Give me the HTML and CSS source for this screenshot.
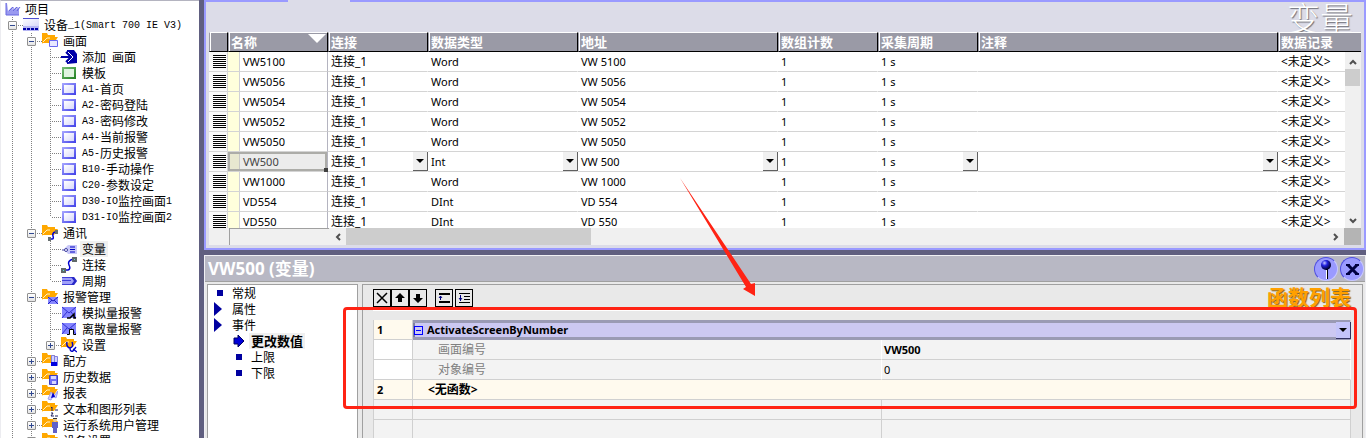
FILE: index.html
```
<!DOCTYPE html>
<html lang="zh-CN">
<head>
    <meta charset="UTF-8">
    <meta name="viewport" content="width=device-width, initial-scale=1.0">
    <title>变量</title>
    <link rel="stylesheet" href="styles.css">
</head>
<body>
    <!-- Иконки дерева и кнопок -->
    <svg class="sprite" width="0" height="0" aria-hidden="true">
        <defs>
            <linearGradient id="gBlue" x1="0" y1="0" x2="1" y2="1">
                <stop offset="0" stop-color="#a8a8ff"/>
                <stop offset="1" stop-color="#4040e8"/>
            </linearGradient>
            <linearGradient id="gGreen" x1="0" y1="0" x2="1" y2="1">
                <stop offset="0" stop-color="#78c078"/>
                <stop offset="1" stop-color="#208020"/>
            </linearGradient>
            <linearGradient id="gFace" x1="0" y1="0" x2="1" y2="1">
                <stop offset="0" stop-color="#ffffff"/>
                <stop offset="1" stop-color="#d8d8fa"/>
            </linearGradient>
            <radialGradient id="gBall" cx="0.35" cy="0.3" r="0.7">
                <stop offset="0" stop-color="#c8c8ff"/>
                <stop offset="0.4" stop-color="#2020e0"/>
                <stop offset="1" stop-color="#000020"/>
            </radialGradient>
        </defs>
        <symbol id="i-project" viewBox="0 0 16 16">
            <path d="M1 2h1l1 8 4-4v4l4-4v4l3-4v8H1z" fill="#9a9af0"/>
            <path d="M1 2v12h13M4 10l4-4v4l4-4v4l3-4" fill="none" stroke="#6868e0"/>
        </symbol>
        <symbol id="i-device" viewBox="0 0 16 16">
            <path d="M0 1h16v8H0z" fill="url(#gFace)"/>
            <path d="M0 9h16v5H0z" fill="#b8b8f4"/>
            <path d="M0 1.500h16" stroke="#5050d0"/>
            <path d="M0 11h3v2H0zM4 11h3v2H4zM8 11h3v2H8zM12 11h3v2h-3z" fill="#0000a8"/>
        </symbol>
        <symbol id="i-folder" viewBox="0 0 16 16">
            <path d="M0 0h5l1 2h7v2H6l-4 4-2 3z" fill="#ffa800"/>
            <path d="M5 4h11l-4 6H0z" fill="#ffa800"/>
            <path d="M1 9l4-4h3" fill="none" stroke="#fff0c0"/>
        </symbol>
        <symbol id="i-fscreen" viewBox="0 0 16 16">
            <use href="#i-folder"/>
            <path d="M7.500 7.500h8v6h-8z" fill="#e8e8ff" stroke="#6868f0"/>
        </symbol>
        <symbol id="i-fcomm" viewBox="0 0 16 16">
            <use href="#i-folder"/>
            <path d="M8 14h2q2 0 1-3t2-4" fill="none" stroke="#0000d0" stroke-width="1.500"/>
            <path d="M13 5h3v4h-3zM6 12h3v4H6z" fill="#687070"/>
        </symbol>
        <symbol id="i-falarm" viewBox="0 0 16 16">
            <use href="#i-folder"/>
            <path d="M6 8h10v7H6z" fill="#8888ff"/>
            <path d="M6 8l5 4 5-4M6 15l4-4M16 15l-4-4" fill="none" stroke="#2020c0"/>
        </symbol>
        <symbol id="i-fset" viewBox="0 0 16 16">
            <use href="#i-folder"/>
            <path d="M6 5q-1 5 3 6q4-1 2-6M9 11q0 4 3 3l3-4M12 12l4 3" fill="none" stroke="#0000c8" stroke-width="1.400"/>
        </symbol>
        <symbol id="i-frecipe" viewBox="0 0 16 16">
            <use href="#i-folder"/>
            <path d="M9.500 2.500h3v9h-3zM12.500 3.500h3v9h-3z" fill="#d0d0ff" stroke="#8080e0"/>
            <path d="M9 9h6v4H9z" fill="#0000e0"/>
        </symbol>
        <symbol id="i-fhist" viewBox="0 0 16 16">
            <use href="#i-folder"/>
            <path d="M7.500 6.500h8v9h-8z" fill="#7070f8" stroke="#4040c0"/>
            <path d="M9 7h5v3H9zM10 12h4v3h-4z" fill="#d8d8ff"/>
        </symbol>
        <symbol id="i-freport" viewBox="0 0 16 16">
            <use href="#i-folder"/>
            <path d="M6 14l3-7 3 4 4-5-2 7-3-2-2 4z" fill="#d0d0ff" stroke="#a0a0f0"/>
            <path d="M9 13l2-6 2 5z" fill="#0000d0"/>
        </symbol>
        <symbol id="i-ftext" viewBox="0 0 16 16">
            <use href="#i-folder"/>
            <path d="M9 7l1-1v4M9 12h2l-2 3h3M13 9h3M13 15h3" fill="none" stroke="#202060"/>
        </symbol>
        <symbol id="i-fuser" viewBox="0 0 16 16">
            <use href="#i-folder"/>
            <circle cx="13" cy="3" r="2" fill="#f0c890"/>
            <path d="M11 1h4v1h-4z" fill="#303030"/>
            <path d="M10 5h6v6h-1v5h-4v-5h-1z" fill="#6060c8"/>
        </symbol>
        <symbol id="i-add" viewBox="0 0 16 16">
            <path d="M6 1h7l3 4v9l-10 1v-3l3-3V7L6 5z" fill="#0000a8"/>
            <path d="M0 8h9M5 3l5 5-5 5" fill="none" stroke="#0000a8" stroke-width="2"/>
            <path d="M7 3l5 5-5 5" fill="none" stroke="#fff"/>
        </symbol>
        <symbol id="i-template" viewBox="0 0 16 16">
            <path d="M1 2h14v12H1z" fill="url(#gGreen)"/>
            <path d="M3 4h10v8H3z" fill="#e0f4e0"/>
        </symbol>
        <symbol id="i-screen" viewBox="0 0 16 16">
            <path d="M1 2h14v12H1z" fill="url(#gBlue)"/>
            <path d="M3 4h10v8H3z" fill="url(#gFace)"/>
        </symbol>
        <symbol id="i-tag" viewBox="0 0 16 16">
            <path d="M3 8l4-4h9v9H7z" fill="#c8c8f8"/>
            <path d="M9 6h5M9 8.500h5M9 11h5" stroke="#0000c8"/>
            <path d="M1 9h3" stroke="#4040a0"/>
            <circle cx="5" cy="9" r="1.500" fill="#fff" stroke="#4040a0"/>
        </symbol>
        <symbol id="i-link" viewBox="0 0 16 16">
            <path d="M5 13h2q3-1 1-5t4-6" fill="none" stroke="#0000d0" stroke-width="1.500"/>
            <path d="M11 0h5v5h-5zM0 11h5v5H0z" fill="#606868"/>
            <path d="M13 2h1v1h-1zM2 13h1v1H2z" fill="#60e0e0"/>
        </symbol>
        <symbol id="i-cycle" viewBox="0 0 16 16">
            <path d="M1 4h12l3 4-3 4H1z" fill="#a0a0f8"/>
            <path d="M1 4.500h10M1 7.500h9M1 11.500h10" stroke="#4040d8"/>
            <path d="M10 4l3 4-3 4h3l3-4-3-4z" fill="#2828c8"/>
        </symbol>
        <symbol id="i-analog" viewBox="0 0 16 16">
            <path d="M1 2h14v11H1z" fill="#8484ff"/>
            <path d="M1 2l7 6 7-6M1 13l5-6M15 13l-5-6" fill="none" stroke="#3030d0"/>
            <path d="M6 13h3l4-4v4h2" fill="none" stroke="#000" stroke-width="1.500"/>
        </symbol>
        <symbol id="i-discrete" viewBox="0 0 16 16">
            <path d="M1 2h14v11H1z" fill="#8484ff"/>
            <path d="M1 2l7 6 7-6M1 13l5-6M15 13l-5-6" fill="none" stroke="#3030d0"/>
            <path d="M8 9h5v5H8z" fill="#fff"/>
            <path d="M6 13.500h2.500v-5h4v5H15" fill="none" stroke="#000"/>
        </symbol>
    </svg>

    <aside class="sidebar">
        <a class="project" href="#"><svg class="icon"><use href="#i-project"/></svg>项目</a>
        <ul class="tree">
            <li class="open"><button class="toggle minus" aria-label="收起"></button><a href="#"><svg class="icon"><use href="#i-device"/></svg>设备<span class="lat">_1(Smart 700 IE V3)</span></a>
                <ul>
                    <li><button class="toggle minus" aria-label="收起"></button><a href="#"><svg class="icon"><use href="#i-fscreen"/></svg>画面</a>
                        <ul>
                            <li><a href="#"><svg class="icon"><use href="#i-add"/></svg>添加<span class="lat">&nbsp;</span>画面</a></li>
                            <li><a href="#"><svg class="icon"><use href="#i-template"/></svg>模板</a></li>
                            <li><a href="#"><svg class="icon"><use href="#i-screen"/></svg><span class="lat">A1-</span>首页</a></li>
                            <li><a href="#"><svg class="icon"><use href="#i-screen"/></svg><span class="lat">A2-</span>密码登陆</a></li>
                            <li><a href="#"><svg class="icon"><use href="#i-screen"/></svg><span class="lat">A3-</span>密码修改</a></li>
                            <li><a href="#"><svg class="icon"><use href="#i-screen"/></svg><span class="lat">A4-</span>当前报警</a></li>
                            <li><a href="#"><svg class="icon"><use href="#i-screen"/></svg><span class="lat">A5-</span>历史报警</a></li>
                            <li><a href="#"><svg class="icon"><use href="#i-screen"/></svg><span class="lat">B10-</span>手动操作</a></li>
                            <li><a href="#"><svg class="icon"><use href="#i-screen"/></svg><span class="lat">C20-</span>参数设定</a></li>
                            <li><a href="#"><svg class="icon"><use href="#i-screen"/></svg><span class="lat">D30-IO</span>监控画面<span class="lat">1</span></a></li>
                            <li><a href="#"><svg class="icon"><use href="#i-screen"/></svg><span class="lat">D31-IO</span>监控画面<span class="lat">2</span></a></li>
                        </ul>
                    </li>
                    <li><button class="toggle minus" aria-label="收起"></button><a href="#"><svg class="icon"><use href="#i-fcomm"/></svg>通讯</a>
                        <ul>
                            <li><a href="#"><svg class="icon"><use href="#i-tag"/></svg><span class="current">变量</span></a></li>
                            <li><a href="#"><svg class="icon"><use href="#i-link"/></svg>连接</a></li>
                            <li><a href="#"><svg class="icon"><use href="#i-cycle"/></svg>周期</a></li>
                        </ul>
                    </li>
                    <li><button class="toggle minus" aria-label="收起"></button><a href="#"><svg class="icon"><use href="#i-falarm"/></svg>报警管理</a>
                        <ul>
                            <li><a href="#"><svg class="icon"><use href="#i-analog"/></svg>模拟量报警</a></li>
                            <li><a href="#"><svg class="icon"><use href="#i-discrete"/></svg>离散量报警</a></li>
                            <li><button class="toggle" aria-label="展开"></button><a href="#"><svg class="icon"><use href="#i-fset"/></svg>设置</a></li>
                        </ul>
                    </li>
                    <li><button class="toggle" aria-label="展开"></button><a href="#"><svg class="icon"><use href="#i-frecipe"/></svg>配方</a></li>
                    <li><button class="toggle" aria-label="展开"></button><a href="#"><svg class="icon"><use href="#i-fhist"/></svg>历史数据</a></li>
                    <li><button class="toggle" aria-label="展开"></button><a href="#"><svg class="icon"><use href="#i-freport"/></svg>报表</a></li>
                    <li><button class="toggle" aria-label="展开"></button><a href="#"><svg class="icon"><use href="#i-ftext"/></svg>文本和图形列表</a></li>
                    <li><button class="toggle" aria-label="展开"></button><a href="#"><svg class="icon"><use href="#i-fuser"/></svg>运行系统用户管理</a></li>
                    <li><button class="toggle" aria-label="展开"></button><a href="#"><svg class="icon"><use href="#i-folder"/></svg>设备设置</a></li>
                </ul>
            </li>
        </ul>
    </aside>

    <main class="main">
        <section class="editor">
            <span class="tab-gap"></span>
            <h1>变量</h1>
            <div class="grid-view">
                <table class="tags">
                    <colgroup>
                        <col class="c-head"><col class="c-100"><col class="c-100"><col class="c-150"><col class="c-200">
                        <col class="c-100"><col class="c-100"><col><col class="c-last">
                    </colgroup>
                    <thead>
                        <tr><th></th><th>名称<span class="sort"></span></th><th>连接</th><th>数据类型</th><th>地址</th><th>数组计数</th><th>采集周期</th><th>注释</th><th>数据记录</th></tr>
                    </thead>
                    <tbody>
                        <tr><td><i></i></td><td>VW5100</td><td class="cn">连接_1</td><td>Word</td><td>VW 5100</td><td>1</td><td>1 s</td><td></td><td class="cn">&lt;未定义&gt;</td></tr>
                        <tr><td><i></i></td><td>VW5056</td><td class="cn">连接_1</td><td>Word</td><td>VW 5056</td><td>1</td><td>1 s</td><td></td><td class="cn">&lt;未定义&gt;</td></tr>
                        <tr><td><i></i></td><td>VW5054</td><td class="cn">连接_1</td><td>Word</td><td>VW 5054</td><td>1</td><td>1 s</td><td></td><td class="cn">&lt;未定义&gt;</td></tr>
                        <tr><td><i></i></td><td>VW5052</td><td class="cn">连接_1</td><td>Word</td><td>VW 5052</td><td>1</td><td>1 s</td><td></td><td class="cn">&lt;未定义&gt;</td></tr>
                        <tr><td><i></i></td><td>VW5050</td><td class="cn">连接_1</td><td>Word</td><td>VW 5050</td><td>1</td><td>1 s</td><td></td><td class="cn">&lt;未定义&gt;</td></tr>
                        <tr class="selected">
                            <td><i></i></td>
                            <td>VW500</td>
                            <td class="cn">连接_1<button class="drop" aria-label="选择连接"></button></td>
                            <td>Int<button class="drop" aria-label="选择数据类型"></button></td>
                            <td>VW 500<button class="drop" aria-label="选择地址"></button></td>
                            <td>1</td>
                            <td>1 s<button class="drop" aria-label="选择采集周期"></button></td>
                            <td><button class="drop" aria-label="编辑注释"></button></td>
                            <td class="cn">&lt;未定义&gt;</td>
                        </tr>
                        <tr><td><i></i></td><td>VW1000</td><td class="cn">连接_1</td><td>Word</td><td>VW 1000</td><td>1</td><td>1 s</td><td></td><td class="cn">&lt;未定义&gt;</td></tr>
                        <tr><td><i></i></td><td>VD554</td><td class="cn">连接_1</td><td>DInt</td><td>VD 554</td><td>1</td><td>1 s</td><td></td><td class="cn">&lt;未定义&gt;</td></tr>
                        <tr><td><i></i></td><td>VD550</td><td class="cn">连接_1</td><td>DInt</td><td>VD 550</td><td>1</td><td>1 s</td><td></td><td class="cn">&lt;未定义&gt;</td></tr>
                    </tbody>
                </table>
                <div class="vscroll">
                    <button aria-label="向上滚动"><svg width="8" height="6"><path d="M1 5l3-3 3 3" /></svg></button>
                    <span class="thumb"></span>
                    <button aria-label="向下滚动"><svg width="8" height="6"><path d="M1 1l3 3 3-3" /></svg></button>
                </div>
            </div>
            <div class="hscroll">
                <span class="fixed"></span>
                <button aria-label="向左滚动"><svg width="6" height="8"><path d="M5 1l-3 3 3 3" /></svg></button>
                <span class="thumb"></span>
                <button class="right" aria-label="向右滚动"><svg width="6" height="8"><path d="M1 1l3 3-3 3" /></svg></button>
                <span class="corner"></span>
            </div>
        </section>

        <section class="props">
            <header>
                <h2>VW500 (变量)</h2>
                <button class="round" aria-label="固定"><svg width="22" height="22"><path d="M12 10v11" stroke="#000" stroke-width="2"/><path d="M11.500 12v9" stroke="#fff"/><circle cx="11" cy="7" r="5" fill="url(#gBall)"/></svg></button>
                <button class="round" aria-label="关闭"><svg width="22" height="22"><path d="M7 7l9 9M16 7l-9 9" stroke="#000040" stroke-width="3"/><path d="M5 7h4M14 7h4M5 16h4M14 16h4" stroke="#000040" stroke-width="2"/></svg></button>
            </header>
            <div class="props-body">
                <nav class="pages">
                    <a href="#"><span class="square"></span>常规</a>
                    <a href="#"><span class="tri"></span>属性</a>
                    <a href="#"><span class="tri"></span>事件</a>
                    <a href="#" class="sub active"><svg width="12" height="12"><path d="M1 3h4V0l6 6-6 6V9H1z" fill="#0000d8" stroke="#000060"/></svg><span>更改数值</span></a>
                    <a href="#" class="sub"><span class="square"></span>上限</a>
                    <a href="#" class="sub"><span class="square"></span>下限</a>
                </nav>
                <div class="functions">
                    <div class="toolbar">
                        <button aria-label="删除"><svg width="16" height="16"><path d="M3 3l10 10M13 3L3 13" stroke="#000" stroke-width="1.500"/></svg></button>
                        <button aria-label="上移"><svg width="16" height="16"><path d="M8 3l5 5h-3v4H6V8H3z"/></svg></button>
                        <button aria-label="下移"><svg width="16" height="16"><path d="M8 13l5-5h-3V4H6v4H3z"/></svg></button>
                        <button class="spaced" aria-label="展开全部"><svg width="16" height="16"><path d="M3 4h11M7 12h7M3 12h5" stroke="#000" stroke-width="2"/><path d="M4.500 10V6M3 8l1.500-2L6 8" fill="none" stroke="#000080"/></svg></button>
                        <button class="near" aria-label="收起全部"><svg width="16" height="16"><path d="M3 3.500h11M8 6.500h6M8 9.500h6M3 12.500h11" stroke="#000"/><path d="M4.500 5v6M3 8l1.500 2L6 8" fill="none" stroke="#000080"/></svg></button>
                        <h3>函数列表</h3>
                    </div>
                    <div class="list-wrap">
                        <table class="list">
                            <colgroup><col class="c-num"><col><col></colgroup>
                            <tr class="func"><th>1</th><td colspan="2"><button class="fold" aria-label="收起"></button>ActivateScreenByNumber<button class="drop" aria-label="选择函数"></button></td></tr>
                            <tr class="param"><th></th><td>画面编号</td><td><b>VW500</b></td></tr>
                            <tr class="param"><th></th><td>对象编号</td><td>0</td></tr>
                            <tr class="none"><th>2</th><td colspan="2">&lt;无函数&gt;</td></tr>
                            <tr><th></th><td></td><td></td></tr>
                            <tr><th></th><td></td><td></td></tr>
                        </table>
                    </div>
                </div>
            </div>
            <div class="mark-box"></div>
        </section>
        <svg class="mark-arrow" width="80" height="124"><path d="M0 1L71 107l4-1v13l-12-7 3-2z" fill="#ff2314"/></svg>
    </main>
</body>
</html>
```
FILE: styles.css
```
* {
    box-sizing: border-box;
}

body {
    margin: 0;
    height: 100vh;
    display: flex;
    overflow: hidden;
    background-color: #605f80;
    font-family: "Noto Sans", "Noto Sans CJK SC", sans-serif;
    font-size: 11px;
    color: #000;
}

button {
    padding: 0;
    border: none;
    background: none;
    font: inherit;
}

a {
    color: inherit;
    text-decoration: none;
}

h1,
h2,
h3,
ul {
    margin: 0;
    padding: 0;
    list-style: none;
}

.sprite {
    position: absolute;
}

/* Дерево проекта */
.sidebar {
    flex: 0 0 199px;
    overflow: hidden;
    background-color: #fff;
    border-top: 1px solid #b4b4c0;
    border-left: 1px solid #ececf0;
    font-family: "Noto Sans CJK SC", sans-serif;
    font-size: 12px;
    line-height: 16px;
    white-space: nowrap;
}

.lat {
    font-family: "Liberation Mono", monospace;
    font-size: 10px;
    line-height: 18px;
}

.icon {
    flex: none;
    width: 16px;
    height: 16px;
    margin-right: 5px;
}

.project {
    display: flex;
    padding-left: 4px;
}

.project .icon {
    margin-right: 4px;
}

.tree {
    padding-left: 7px;
}

.tree ul {
    flex: 0 0 100%;
    padding-left: 19px;
}

.tree li {
    display: flex;
    flex-wrap: wrap;
    background: linear-gradient(#808080 50%, transparent 50%) 4px 0 / 1px 2px repeat-y;
}

.tree ul li:last-child {
    background: repeating-linear-gradient(#808080 0 1px, transparent 1px 2px) 4px 0 / 1px 8px no-repeat;
}

/* точки рисуются только перед иконкой */
.tree a {
    display: flex;
    height: 16px;
    padding-left: 6px;
    background: repeating-linear-gradient(90deg, transparent 0 1px, #808080 1px 2px) 0 8px / 6px 1px no-repeat;
}

.tree a:first-child {
    padding-left: 10px;
    margin-left: 5px;
    background-size: 10px 1px;
}

.tree .current {
    background-color: #f0f0f0;
    margin: 0 -2px;
    padding: 0 2px;
}

.toggle {
    width: 9px;
    height: 9px;
    margin: 4px 0 3px;
    border: 1px solid #909090;
    border-radius: 1px;
    background:
        linear-gradient(#304890, #304890) center / 5px 1px no-repeat,
        linear-gradient(#304890, #304890) center / 1px 5px no-repeat,
        linear-gradient(#fff, #e4e4e4);
}

.toggle.minus {
    background:
        linear-gradient(#304890, #304890) center / 5px 1px no-repeat,
        linear-gradient(#fff, #e4e4e4);
}

/* Правая часть */
.main {
    position: relative;
    flex: 1;
    min-width: 0;
    display: flex;
    flex-direction: column;
    gap: 5px;
    padding-left: 5px;
}

.editor {
    position: relative;
    padding: 0 3px 3px;
    border: 2px solid #9a9aff;
    background-color: #dcdce8;
}

.tab-gap {
    position: absolute;
    top: -2px;
    left: 82px;
    width: 62px;
    height: 2px;
    background-color: #dcdce8;
}

.editor h1 {
    height: 30px;
    padding-right: 8px;
    font-family: "Noto Sans CJK SC", sans-serif;
    font-size: 33px;
    font-weight: 300;
    line-height: 30px;
    text-align: right;
    color: #fff;
    text-shadow: 1px 1px 1px #707078;
}

.grid-view {
    position: relative;
    height: 196px;
    overflow: hidden;
    background-color: #fff;
}

table {
    width: 100%;
    table-layout: fixed;
    border-collapse: separate;
    border-spacing: 0;
}

.c-head { width: 19px; }
.c-100 { width: 100px; }
.c-150 { width: 150px; }
.c-200 { width: 200px; }
.c-last { width: 83px; }
.c-num { width: 40px; }

.tags th,
.tags td {
    position: relative;
    height: 20px;
    padding: 0 0 0 3px;
    line-height: 18px;
    text-align: left;
    white-space: nowrap;
}

.tags th {
    border: 1px solid #9a9aa6;
    border-top-color: #fff;
    border-bottom-color: #000;
    border-right-color: #000;
    background-color: #9a9aa6;
    box-shadow: inset 1px 0 #fff;
    padding-left: 2px;
    font-family: "Noto Sans CJK SC", sans-serif;
    font-size: 13px;
    line-height: 16px;
    color: #fff;
}

.tags th:last-child {
    border-right: none;
}

.tags td {
    border-bottom: 1px solid #d4d4d4;
    border-right: 1px solid #fff;
}

.tags .cn {
    font-size: 12px;
}

.tags td:first-child {
    border-right-color: #d4d4d4;
    background-color: #f8f8f8;
    padding-left: 4px;
}

.tags td i {
    display: block;
    width: 13px;
    height: 13px;
    background: repeating-linear-gradient(#000 0 1px, #fff 1px 2px);
}

.tags td:nth-child(2) {
    padding-left: 15px;
    border-right-color: #b4b4c0;
    background: linear-gradient(90deg, #ffffdc 11px, #d0d0d8 11px 12px, #fff 12px);
}

.tags .selected td:nth-child(2) {
    background: linear-gradient(90deg, #e8e8d0 11px, #c8c8c8 11px 12px, #ececec 12px);
    box-shadow: inset 0 0 0 2px #acaca8;
    color: #444;
}

.tags .selected td:nth-child(2)::after {
    content: "";
    position: absolute;
    right: -1px;
    bottom: -1px;
    width: 4px;
    height: 4px;
    background-color: #404040;
}

.sort {
    position: absolute;
    top: 1px;
    right: 1px;
    border: 9px solid transparent;
    border-top-color: #fff;
    border-bottom: none;
}

.drop {
    position: absolute;
    top: 0;
    right: -1px;
    bottom: 0;
    width: 15px;
    border-right: 1px solid #606060;
    border-bottom: 1px solid #606060;
    background-color: #f0f0f0;
}

.drop::after {
    content: "";
    display: block;
    width: 0;
    margin: 0 auto;
    border: 4px solid transparent;
    border-top-color: #000;
    border-bottom: none;
}

/* Полосы прокрутки */
.vscroll {
    position: absolute;
    top: 20px;
    right: 0;
    bottom: 0;
    width: 16px;
    display: flex;
    flex-direction: column;
    background-color: #f0f0f0;
}

.vscroll button {
    height: 17px;
    margin-bottom: auto;
}

.vscroll button:last-child {
    margin: auto 0 0;
}

.vscroll .thumb {
    position: absolute;
    top: 17px;
    width: 15px;
    height: 17px;
    background-color: #cdcdcd;
}

.vscroll path,
.hscroll path {
    fill: none;
    stroke: #505050;
    stroke-width: 2;
}

.hscroll {
    display: flex;
    height: 17px;
    background-color: #f0f0f0;
}

.hscroll .fixed {
    width: 100px;
    margin-left: 20px;
    border-top: 1px solid #a0a0a0;
    border-left: 1px solid #a0a0a0;
}

.hscroll button {
    width: 17px;
}

.hscroll .thumb {
    width: 245px;
    background-color: #cdcdcd;
}

.hscroll .right {
    margin-left: auto;
}

.hscroll .corner {
    width: 17px;
    background-color: #b4b4b4;
}

/* Окно свойств */
.props {
    position: relative;
    flex: 1;
    min-height: 0;
    display: flex;
    flex-direction: column;
    border: 1px solid #f0f0f4;
    border-bottom: none;
    background-color: #e9e9e9;
}

.props header {
    display: flex;
    align-items: center;
    gap: 2px;
    height: 26px;
    padding: 0 1px 0 3px;
    border-bottom: 1px solid #a0a0a0;
    background-color: #b8b8c4;
}

.props h2 {
    flex: 1;
    font-family: "Open Sans", "Noto Sans CJK SC", sans-serif;
    font-size: 17px;
    line-height: 24px;
    color: #fff;
}

.round {
    width: 24px;
    height: 24px;
    border: 1px solid #5050e0;
    border-right-color: #c8c8ff;
    border-bottom-color: #c8c8ff;
    border-radius: 50%;
    background-color: #9a9aff;
}

.round svg {
    display: block;
}

.props-body {
    flex: 1;
    min-height: 0;
    display: flex;
    gap: 4px;
    padding: 2px 2px 0;
}

.pages {
    width: 151px;
    padding-left: 6px;
    border: 1px solid #a0a0a0;
    border-bottom: none;
    background-color: #fff;
    font-family: "Noto Sans CJK SC", sans-serif;
    font-size: 12px;
}

.pages a {
    display: grid;
    grid-template-columns: 13px auto;
    gap: 5px;
    align-items: center;
    justify-content: start;
    height: 16px;
    line-height: 16px;
}

.pages .sub {
    padding-left: 19px;
}

.pages .active span {
    padding: 0 2px;
    margin-left: -2px;
    background-color: #f0f0f0;
    font-size: 13px;
    font-weight: bold;
}

.square {
    width: 6px;
    height: 6px;
    margin-left: 3px;
    background-color: #0000a0;
}

.tri {
    border: 7px solid transparent;
    border-left: 8px solid #0000a0;
    border-right: none;
    width: 0;
}

.functions {
    flex: 1;
    min-width: 0;
    padding: 4px 11px 0 10px;
    border: 1px solid #a0a0a0;
    border-bottom: none;
}

.toolbar {
    display: flex;
    height: 22px;
    border-bottom: 1px solid #fff;
}

.toolbar button {
    width: 18px;
    height: 18px;
    border: 1px solid #000;
}

.toolbar svg {
    display: block;
}

.toolbar .spaced {
    margin-left: 8px;
}

.toolbar .near {
    margin-left: 2px;
}

.toolbar h3 {
    margin-left: auto;
    font-family: "Noto Sans CJK SC", sans-serif;
    font-size: 21px;
    line-height: 14px;
    color: #ffa000;
    text-shadow: 1px 1px 1px #806020;
}

.list-wrap {
    padding-top: 9px;
}

.list th,
.list td {
    position: relative;
    height: 20px;
    padding: 0 0 0 2px;
    border-right: 1px solid #d0d0d0;
    border-bottom: 1px solid #d0d0d0;
    background-color: #f3f3f3;
    line-height: 18px;
    text-align: left;
}

.list th {
    padding-left: 3px;
    border-left: 1px solid #d0d0d0;
}

.list .func th,
.list .none th,
.list .none td {
    background-color: #fffaee;
}

.list .func td {
    padding-left: 1px;
    border-bottom-color: #9a9ab4;
    background-color: #ccc8f2;
    box-shadow: inset 0 3px #9a9ab4, inset 0 -2px #9a9ab4, inset 2px 0 #8080a0;
    font-weight: bold;
}

.list .func .drop {
    top: 2px;
    background-color: #c4c4fa;
    border-color: #303060;
}

.fold {
    width: 9px;
    height: 9px;
    margin-right: 4px;
    border: 1px solid #0000ff;
    background: linear-gradient(#0000ff, #0000ff) center / 5px 1px no-repeat;
}

.list .param th {
    background-color: #fff;
}

.list .param td {
    border-right-color: #fff;
}

.list .param td:nth-child(2) {
    padding-left: 25px;
    font-size: 12px;
    color: #808080;
}

.list .none td {
    padding-left: 15px;
    font-size: 12px;
    font-weight: bold;
}

/* Красная рамка и стрелка поверх окна */
.mark-box {
    position: absolute;
    top: 51px;
    left: 138px;
    right: 8px;
    height: 102px;
    border: 3px solid #ff2314;
    border-radius: 4px;
}

.mark-arrow {
    position: absolute;
    top: 177px;
    left: 481px;
}
```
